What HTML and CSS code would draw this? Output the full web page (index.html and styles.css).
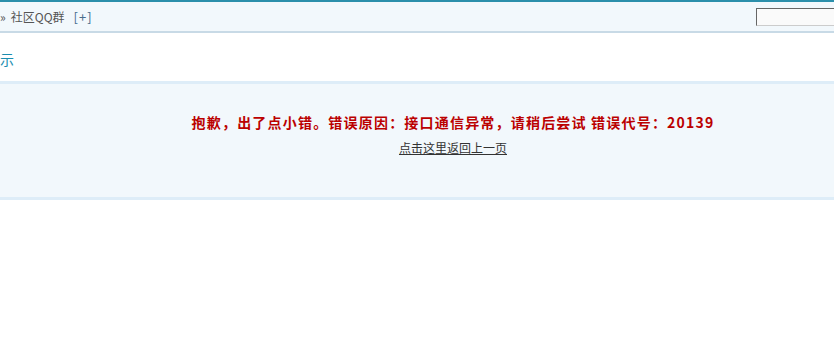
FILE: index.html
```html
<!DOCTYPE html>
<html lang="zh-CN">
<head>
    <meta charset="utf-8">
    <title>提示信息</title>
    <link rel="stylesheet" href="styles.css">
</head>
<body>
    <div class="topbar">
        <div class="nav">
            <span class="crumbs"><span class="sep">&raquo;</span>社区QQ群<a class="add" href="#">[+]</a></span>
            <input class="search" type="text">
        </div>
    </div>

    <div class="page">
        <h3 class="title">提示</h3>
        <div class="msgbox">
            <p class="errmsg">抱歉，出了点小错。错误原因：接口通信异常，请稍后尝试 错误代号：20139</p>
            <p class="back"><a href="#">点击这里返回上一页</a></p>
        </div>
    </div>
</body>
</html>
```

FILE: styles.css
```css
html, body {
    overflow: hidden;
}
body {
    margin: 0;
    background-color: #fff;
    font-family: "Noto Sans CJK SC", "DejaVu Sans", sans-serif;
    font-size: 12px;
    color: #333;
}
.topbar {
    border-top: 2px solid #2b8fab;
    border-bottom: 2px solid #c8dae6;
    background-color: #f2f8fc;
}
.nav {
    display: flex;
    align-items: center;
    height: 29px;
}
.crumbs {
    color: #555;
}
.sep {
    margin-right: 5px;
}
.add {
    color: #4a6d8c;
    text-decoration: none;
    font-size: 13px;
    letter-spacing: 1px;
    margin-left: 9px;
}
.search {
    margin-left: auto;
    margin-right: -36px;
    width: 108px;
    height: 14px;
    padding: 1px 2px;
    border: 1px solid #ccc;
    border-top-color: #666;
    border-left-color: #666;
    background-color: #fafafa;
}
.page {
    margin-left: -14px;
}
.title {
    margin: 0;
    padding-top: 17px;
    height: 31px;
    font-size: 14px;
    font-weight: normal;
    line-height: 18px;
    color: #1a8db0;
}
.msgbox {
    height: 113px;
    border-top: 3px solid #deedf8;
    border-bottom: 3px solid #deedf8;
    background-color: #f2f8fc;
    padding-left: 86px;
    text-align: center;
}
.errmsg {
    margin: 0;
    padding-top: 28px;
    line-height: 20px;
    font-size: 14px;
    font-weight: bold;
    letter-spacing: 1.2px;
    color: #b00;
}
.back {
    margin: 8px 0 0;
    line-height: 16px;
}
.back a {
    color: #333;
}
```
